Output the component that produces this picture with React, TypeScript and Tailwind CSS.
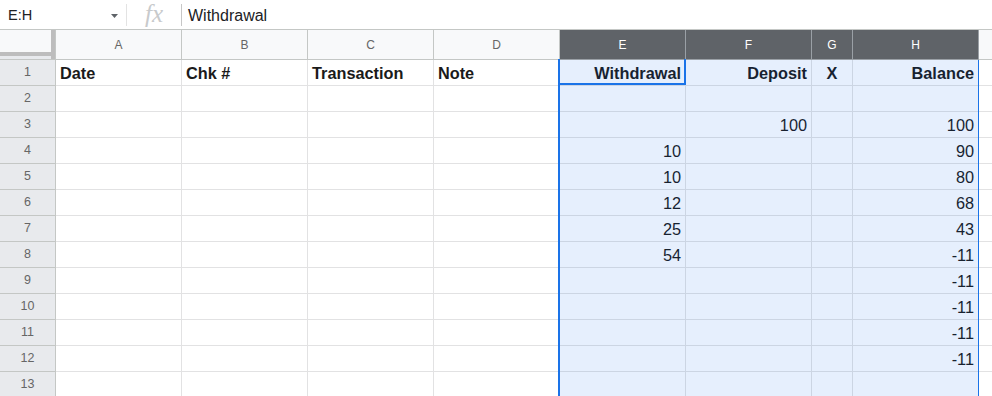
import React from "react";

const cols = [
  { key: "A", w: "w-[126px]" },
  { key: "B", w: "w-[126px]" },
  { key: "C", w: "w-[126px]" },
  { key: "D", w: "w-[126px]" },
  { key: "E", w: "w-[126px]" },
  { key: "F", w: "w-[126px]" },
  { key: "G", w: "w-[41px]" },
  { key: "H", w: "w-[126px]" },
];

type Cell = { t: string; b?: boolean; al?: "l" | "r" | "c" };

const rows: Record<number, Record<string, Cell>> = {
  1: {
    A: { t: "Date", b: true, al: "l" },
    B: { t: "Chk #", b: true, al: "l" },
    C: { t: "Transaction", b: true, al: "l" },
    D: { t: "Note", b: true, al: "l" },
    E: { t: "Withdrawal", b: true, al: "r" },
    F: { t: "Deposit", b: true, al: "r" },
    G: { t: "X", b: true, al: "c" },
    H: { t: "Balance", b: true, al: "r" },
  },
  3: { F: { t: "100", al: "r" }, H: { t: "100", al: "r" } },
  4: { E: { t: "10", al: "r" }, H: { t: "90", al: "r" } },
  5: { E: { t: "10", al: "r" }, H: { t: "80", al: "r" } },
  6: { E: { t: "12", al: "r" }, H: { t: "68", al: "r" } },
  7: { E: { t: "25", al: "r" }, H: { t: "43", al: "r" } },
  8: { E: { t: "54", al: "r" }, H: { t: "-11", al: "r" } },
  9: { H: { t: "-11", al: "r" } },
  10: { H: { t: "-11", al: "r" } },
  11: { H: { t: "-11", al: "r" } },
  12: { H: { t: "-11", al: "r" } },
};

const selected = new Set(["E", "F", "G", "H"]);

export default function App() {
  const rowNums = Array.from({ length: 13 }, (_, i) => i + 1);
  return (
    <div
      className="relative w-[992px] h-[396px] overflow-hidden bg-white text-black"
      style={{ fontFamily: '"Liberation Sans", Arial, sans-serif' }}
    >
      {/* Formula bar */}
      <div className="flex h-[30px] items-center border-b border-[#c4c7c5] bg-white">
        <div className="flex w-[126px] items-center pl-[8px] pr-[8px] pt-[2px] text-[14.5px] text-[#202124]">
          <span>E:H</span>
          <svg className="ml-auto" width="7" height="4" viewBox="0 0 7 4">
            <path d="M0 0 L7 0 L3.5 4 Z" fill="#5f6368" />
          </svg>
        </div>
        <div className="h-[22px] w-px bg-[#e3e3e3]" />
        <div
          className="flex w-[54px] items-center justify-center pb-[2px] text-[25px] italic leading-none text-[#c8cacc]"
          style={{ fontFamily: '"Liberation Serif", "Times New Roman", serif' }}
        >
          fx
        </div>
        <div className="h-[22px] w-px bg-[#c7c7c7]" />
        <div className="pl-[6px] pt-[3px] text-[16px] text-[#202124]">Withdrawal</div>
      </div>

      {/* Column headers */}
      <div className="flex h-[30px]">
        <div className="flex h-[30px] w-[56px] flex-col border-b border-r border-[#c4c7c5]">
          <div className="h-[26px] w-[55px] border-b-4 border-r-4 border-[#bdbdbd] bg-[#f8f9fa]" />
          <div className="w-[55px] flex-1 border-r-4 border-[#bdbdbd] bg-[#e8eaed]" />
        </div>
        {cols.map((c) => {
          const sel = selected.has(c.key);
          return (
            <div
              key={c.key}
              className={`${c.w} flex h-[30px] items-center justify-center border-b border-r text-[12px] ${
                sel
                  ? "border-[#9aa0a6] bg-[#5f6368] text-white"
                  : "border-[#c4c7c5] bg-[#f8f9fa] text-[#666666]"
              }`}
            >
              {c.key}
            </div>
          );
        })}
        <div className="h-[30px] flex-1 border-b border-[#c4c7c5] bg-[#f8f9fa]" />
      </div>

      {/* Rows */}
      {rowNums.map((r) => (
        <div key={r} className="flex h-[26px]">
          <div className="flex h-[26px] w-[56px] items-center justify-center border-b border-r border-[#c4c7c5] bg-[#e8eaed] text-[12.5px] text-[#666666]">
            {r}
          </div>
          {cols.map((c) => {
            const cell = rows[r]?.[c.key];
            const al =
              cell?.al === "r"
                ? "justify-end"
                : cell?.al === "c"
                ? "justify-center"
                : "justify-start";
            return (
              <div
                key={c.key}
                className={`${c.w} flex h-[26px] items-end overflow-hidden whitespace-nowrap border-b border-r border-[#e2e2e3] px-[4px] pb-[3px] text-[16.3px] leading-[18px] text-[#1a1a1a] ${al} ${
                  cell?.b ? "font-bold" : ""
                }`}
              >
                {cell?.t ?? ""}
              </div>
            );
          })}
          <div className="h-[26px] flex-1 border-b border-[#e2e2e3]" />
        </div>
      ))}

      {/* Selection overlay E:H */}
      <div className="pointer-events-none absolute left-[558px] top-[60px] bottom-0 w-[421px] border-l-2 border-r border-[#1a73e8] bg-[rgba(14,101,235,0.1)]" />
      {/* Active cell E1 */}
      <div className="pointer-events-none absolute left-[558px] top-[59px] h-[26px] w-[128px] border-2 border-t-0 border-[#1a73e8]" />
    </div>
  );
}
